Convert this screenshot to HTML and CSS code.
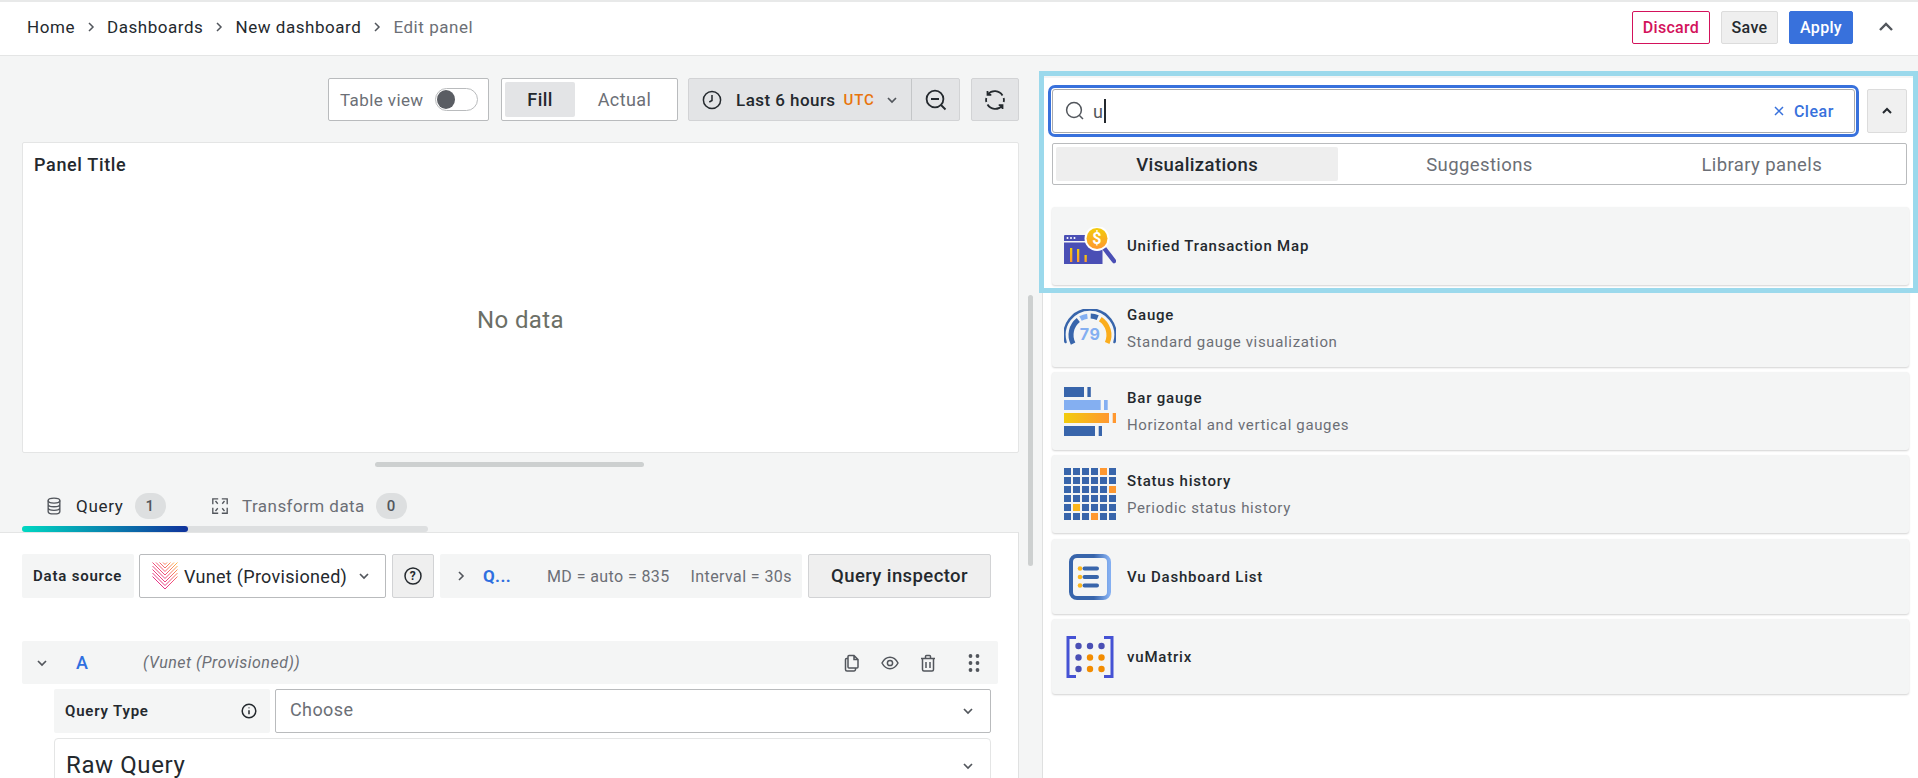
FILE: index.html
```html
<!DOCTYPE html>
<html lang="en">
<head>
<meta charset="utf-8">
<title>Edit panel</title>
<link rel="stylesheet" href="styles.css">
</head>
<body>
<header class="topbar">
  <nav class="crumbs">
    <span>Home</span>
    <svg class="crumb-sep" viewBox="0 0 10 12"><path d="M3 2l4 4-4 4"/></svg>
    <span>Dashboards</span>
    <svg class="crumb-sep" viewBox="0 0 10 12"><path d="M3 2l4 4-4 4"/></svg>
    <span>New dashboard</span>
    <svg class="crumb-sep" viewBox="0 0 10 12"><path d="M3 2l4 4-4 4"/></svg>
    <span class="crumb-last">Edit panel</span>
  </nav>
  <div class="top-actions">
    <button class="btn btn-discard">Discard</button>
    <button class="btn btn-save">Save</button>
    <button class="btn btn-apply">Apply</button>
    <svg class="top-chevron" viewBox="0 0 16 10"><path d="M2 8l6-6 6 6"/></svg>
  </div>
</header>

<main class="workspace">
  <section class="editor">
    <div class="toolbar">
      <div class="tool table-view">
        <span>Table view</span>
        <span class="switch"><span class="knob"></span></span>
      </div>
      <div class="tool radio">
        <span class="radio-item radio-on">Fill</span>
        <span class="radio-item">Actual</span>
      </div>
      <div class="tool time-group">
        <div class="time-range">
          <svg class="ico-20" viewBox="0 0 20 20"><circle cx="10" cy="10" r="8.600"/><path d="M10 5v5.500L7.300 12"/></svg>
          <span class="time-label">Last 6 hours</span>
          <span class="utc">UTC</span>
          <svg class="chev" viewBox="0 0 12 8"><path d="M2 2l4 4 4-4"/></svg>
        </div>
        <div class="time-zoom">
          <svg class="ico-22" viewBox="0 0 22 22"><circle cx="10" cy="10" r="8.400"/><path d="M6 10h8M16 16l4.500 4.500"/></svg>
        </div>
      </div>
      <div class="tool refresh">
        <svg class="ico-22" viewBox="0 0 22 22"><path d="M18.500 6.500A9 9 0 0 0 4 5.200M3.500 2v3.800h3.800M3.500 15.500A9 9 0 0 0 18 16.800M18.500 20v-3.800h-3.800M2.300 9a9 9 0 0 0 0 4M19.700 9a9 9 0 0 1 0 4"/></svg>
      </div>
    </div>

    <div class="panel">
      <div class="panel-title">Panel Title</div>
      <div class="panel-empty">No data</div>
    </div>
    <div class="h-handle"></div>

    <div class="query-tabs">
      <div class="qtab qtab-query">
        <svg class="ico-18" viewBox="0 0 18 20"><ellipse cx="9" cy="4" rx="6.500" ry="2.800"/><path d="M2.500 4v12c0 1.600 2.900 2.800 6.500 2.800s6.500-1.200 6.500-2.800V4M2.500 8c0 1.600 2.900 2.800 6.500 2.800s6.500-1.200 6.500-2.800M2.500 12c0 1.600 2.900 2.800 6.500 2.800s6.500-1.200 6.500-2.800"/></svg>
        <span class="qtab-text-on">Query</span>
        <span class="badge">1</span>
      </div>
      <div class="qtab qtab-transform">
        <svg class="ico-18" viewBox="0 0 20 20"><path d="M2 8V2h6M12 2h6v6M18 12v6h-6M8 18H2v-6M5 4.500l2.500 3M15 4.500l-2.500 3M15 15.500l-2.500-3M5 15.500l2.500-3"/></svg>
        <span>Transform data</span>
        <span class="badge">0</span>
      </div>
    </div>
    <div class="tab-track"><div class="tab-progress"></div></div>

    <div class="query">
      <div class="ds-row">
        <div class="label-box ds-label">Data source</div>
        <div class="select ds-select">
          <svg class="vunet" viewBox="0 0 26 28">
            <defs>
              <linearGradient id="vg" gradientUnits="userSpaceOnUse" x1="1" y1="26" x2="25" y2="2">
                <stop offset="0" stop-color="#e11d8f"/>
                <stop offset=".55" stop-color="#f0527a"/>
                <stop offset="1" stop-color="#fdb44b"/>
              </linearGradient>
            </defs>
            <path class="vunet-lines" d="M.5 14.500L13 27 25.500 14.500M.5 11L13 23.500 25.500 11M.5 7.500L13 20 25.500 7.500M.5 4L13 16.500 25.500 4M.5 .5L13 13 25.500 .5M4 .5l9 9 9-9M7.500 .5L13 6l5.500-5.500M11 .5l2 2 2-2"/>
          </svg>
          <span class="ds-name">Vunet (Provisioned)</span>
          <svg class="chev" viewBox="0 0 12 8"><path d="M2 2l4 4 4-4"/></svg>
        </div>
        <div class="help-btn">
          <svg class="ico-18" viewBox="0 0 18 18"><circle cx="9" cy="9" r="8"/><text class="help-q" x="9" y="13">?</text></svg>
        </div>
        <div class="ds-info">
          <svg class="chev-right" viewBox="0 0 8 12"><path d="M2 2l4 4-4 4"/></svg>
          <span class="q-name">Q...</span>
          <span class="md">MD = auto = 835</span>
          <span class="interval">Interval = 30s</span>
        </div>
        <button class="inspector">Query inspector</button>
      </div>

      <div class="q-head">
        <svg class="chev chev-a" viewBox="0 0 12 8"><path d="M2 2l4 4 4-4"/></svg>
        <span class="q-letter">A</span>
        <span class="q-src">(Vunet (Provisioned))</span>
        <div class="q-actions">
          <svg class="ico-18" viewBox="0 0 18 18"><path d="M6 1.500h5l4 4v7.500a1 1 0 0 1-1 1H6a1 1 0 0 1-1-1V2.500a1 1 0 0 1 1-1zM11 1.500v4h4M5 4.500H3.500a1 1 0 0 0-1 1v10a1.500 1.500 0 0 0 1.500 1.500h7a1.500 1.500 0 0 0 1.500-1.500V14"/></svg>
          <svg class="ico-18" viewBox="0 0 18 18"><path d="M1 9c2-3.800 4.800-5.700 8-5.700s6 1.900 8 5.700c-2 3.800-4.800 5.700-8 5.700S3 12.800 1 9z"/><circle cx="9" cy="9" r="2.600"/></svg>
          <svg class="ico-18" viewBox="0 0 18 18"><path d="M2 4.500h14M6.500 4.500V2.500a1 1 0 0 1 1-1h3a1 1 0 0 1 1 1v2M3.500 4.500v11a1.500 1.500 0 0 0 1.500 1.500h8a1.500 1.500 0 0 0 1.500-1.500v-11M7 8v6M11 8v6"/></svg>
          <svg class="grip" viewBox="0 0 12 20"><circle cx="2.500" cy="3" r="1.900"/><circle cx="9.500" cy="3" r="1.900"/><circle cx="2.500" cy="10" r="1.900"/><circle cx="9.500" cy="10" r="1.900"/><circle cx="2.500" cy="17" r="1.900"/><circle cx="9.500" cy="17" r="1.900"/></svg>
        </div>
      </div>

      <div class="q-body">
        <div class="qt-row">
          <div class="label-box qt-label">
            <span>Query Type</span>
            <svg class="ico-16" viewBox="0 0 16 16"><circle cx="8" cy="8" r="6.800"/><path d="M8 7.300v4M8 4.400v.9"/></svg>
          </div>
          <div class="select qt-select">
            <span>Choose</span>
            <svg class="chev" viewBox="0 0 12 8"><path d="M2 2l4 4 4-4"/></svg>
          </div>
        </div>
        <div class="raw">
          <span>Raw Query</span>
          <svg class="chev" viewBox="0 0 12 8"><path d="M2 2l4 4 4-4"/></svg>
        </div>
      </div>
    </div>
  </section>

  <div class="gutter"><div class="v-thumb"></div></div>

  <aside class="picker">
    <div class="search-row">
      <div class="search">
        <svg class="search-ico" viewBox="0 0 20 20"><circle cx="9" cy="9" r="7.400"/><path d="M14.500 14.500L18 18"/></svg>
        <span class="search-value">u</span><span class="caret"></span>
        <span class="clear">
          <svg class="clear-x" viewBox="0 0 10 10"><path d="M1 1l8 8M9 1l-8 8"/></svg>
          Clear
        </span>
      </div>
      <div class="collapse">
        <svg class="chev" viewBox="0 0 12 8"><path d="M2 6l4-4 4 4"/></svg>
      </div>
    </div>
    <div class="picker-tabs">
      <span class="ptab ptab-on">Visualizations</span>
      <span class="ptab">Suggestions</span>
      <span class="ptab">Library panels</span>
    </div>

    <div class="cards">
      <div class="card">
        <svg class="viz-ico utm" viewBox="0 0 52 38">
          <defs>
            <linearGradient id="gold" x1="0" y1="0" x2="0" y2="1">
              <stop offset="0" stop-color="#f2cc0c"/>
              <stop offset="1" stop-color="#ff9830"/>
            </linearGradient>
          </defs>
          <path fill="#4a4fb5" d="M0 9a1 1 0 0 1 1-1h37v6H0zM0 15.500h38.500V37H0z"/>
          <circle cx="3.500" cy="11" r="1" fill="#fff"/><circle cx="7" cy="11" r="1" fill="#fff"/><circle cx="10.500" cy="11" r="1" fill="#fff"/>
          <rect x="6" y="21" width="2.300" height="14" fill="url(#gold)"/>
          <rect x="13" y="22" width="2.300" height="13" fill="url(#gold)"/>
          <rect x="20.500" y="28" width="2.300" height="7" fill="url(#gold)"/>
          <path d="M40 21l10 13" stroke="#4a4fb5" stroke-width="4.500" stroke-linecap="round" fill="none"/>
          <circle cx="33" cy="11.500" r="12.500" fill="#fff"/>
          <circle cx="33" cy="11.500" r="10.500" fill="url(#gold)"/>
          <text class="dollar" x="33" y="17">$</text>
        </svg>
        <div class="card-text"><div class="card-title">Unified Transaction Map</div></div>
      </div>

      <div class="card">
        <svg class="viz-ico gauge" viewBox="0 0 52 38">
          <path d="M1.500 33A25.500 25.500 0 1 1 50.500 33" fill="none" stroke="#3865ab" stroke-width="2.500" stroke-linecap="round"/>
          <path d="M9.100 34.600A19 19 0 0 1 14.300 11" fill="none" stroke="#3865ab" stroke-width="5"/>
          <path d="M16.500 9.500A19 19 0 0 1 23.400 7.200" fill="none" stroke="#84aff1" stroke-width="5"/>
          <path d="M26.700 7A19 19 0 0 1 33.700 8.600" fill="none" stroke="#3865ab" stroke-width="5"/>
          <path d="M36.300 10.100A19 19 0 0 1 43.200 34" fill="none" stroke="#fbad1d" stroke-width="5"/>
          <text class="gauge-num" x="26" y="31">79</text>
        </svg>
        <div class="card-text">
          <div class="card-title">Gauge</div>
          <div class="card-desc">Standard gauge visualization</div>
        </div>
      </div>

      <div class="card">
        <svg class="viz-ico bars" viewBox="0 0 52 49">
          <defs>
            <linearGradient id="bar-grad" x1="0" y1="0" x2="1" y2="0">
              <stop offset="0" stop-color="#f2cc0c"/>
              <stop offset="1" stop-color="#ff9830"/>
            </linearGradient>
          </defs>
          <rect x="0" y="0" width="20" height="10" fill="#3865ab"/><rect x="23.400" y="0" width="3.400" height="10" fill="#3865ab"/>
          <rect x="0" y="13" width="36.700" height="10" fill="#84aff1"/><rect x="40" y="13" width="3.700" height="10" fill="#84aff1"/>
          <rect x="0" y="26" width="45" height="10" fill="url(#bar-grad)"/><rect x="48.700" y="26" width="3.300" height="10" fill="#ff9830"/>
          <rect x="0" y="39" width="31" height="10" fill="#3865ab"/><rect x="34.700" y="39" width="3.300" height="10" fill="#3865ab"/>
        </svg>
        <div class="card-text">
          <div class="card-title">Bar gauge</div>
          <div class="card-desc">Horizontal and vertical gauges</div>
        </div>
      </div>

      <div class="card card-status">
        <svg class="viz-ico status" viewBox="0 0 52 52">
          <g fill="#3865ab">
            <rect x="0" y="0" width="7" height="7"/><rect x="9" y="0" width="7" height="7"/><rect x="18" y="0" width="7" height="7"/><rect x="27" y="0" width="7" height="7"/><rect x="36" y="0" width="7" height="7" fill="#ff9830"/><rect x="45" y="0" width="7" height="7"/>
            <rect x="0" y="9" width="7" height="7"/><rect x="9" y="9" width="7" height="7"/><rect x="18" y="9" width="7" height="7"/><rect x="27" y="9" width="7" height="7"/><rect x="36" y="9" width="7" height="7"/><rect x="45" y="9" width="7" height="7"/>
            <rect x="0" y="18" width="7" height="7"/><rect x="9" y="18" width="7" height="7"/><rect x="18" y="18" width="7" height="7"/><rect x="27" y="18" width="7" height="7"/><rect x="36" y="18" width="7" height="7"/><rect x="45" y="18" width="7" height="7" fill="#ff9830"/>
            <rect x="0" y="27" width="7" height="7"/><rect x="9" y="27" width="7" height="7"/><rect x="18" y="27" width="7" height="7"/><rect x="27" y="27" width="7" height="7"/><rect x="36" y="27" width="7" height="7"/><rect x="45" y="27" width="7" height="7"/>
            <rect x="0" y="36" width="7" height="7"/><rect x="9" y="36" width="7" height="7" fill="#fbb61c"/><rect x="18" y="36" width="7" height="7"/><rect x="27" y="36" width="7" height="7"/><rect x="36" y="36" width="7" height="7"/><rect x="45" y="36" width="7" height="7"/>
            <rect x="0" y="45" width="7" height="7"/><rect x="9" y="45" width="7" height="7"/><rect x="18" y="45" width="7" height="7"/><rect x="27" y="45" width="7" height="7" fill="#ff9830"/><rect x="36" y="45" width="7" height="7"/><rect x="45" y="45" width="7" height="7"/>
          </g>
        </svg>
        <div class="card-text">
          <div class="card-title">Status history</div>
          <div class="card-desc">Periodic status history</div>
        </div>
      </div>

      <div class="card card-short">
        <svg class="viz-ico vulist" viewBox="0 0 52 46">
          <defs>
            <linearGradient id="list-grad" x1="0" y1="0" x2="1" y2="0">
              <stop offset="0" stop-color="#3865ab"/>
              <stop offset=".6" stop-color="#3865ab"/>
              <stop offset="1" stop-color="#84aff1"/>
            </linearGradient>
          </defs>
          <rect x="7" y="2" width="38" height="42" rx="6" fill="none" stroke="url(#list-grad)" stroke-width="4"/>
          <circle cx="16" cy="14.500" r="2.300" fill="#fbb61c"/><circle cx="16" cy="23" r="2.300" fill="#fbb61c"/><circle cx="16" cy="31.500" r="2.300" fill="#fbb61c"/>
          <path d="M20.500 14.500h12.500M20.500 23h12.500M20.500 31.500h12.500" stroke="#3865ab" stroke-width="4" stroke-linecap="round"/>
        </svg>
        <div class="card-text"><div class="card-title">Vu Dashboard List</div></div>
      </div>

      <div class="card card-short">
        <svg class="viz-ico matrix" viewBox="0 0 52 42">
          <path d="M12 1.500H4v39h8M40 1.500h8v39h-8" fill="none" stroke="#4552d4" stroke-width="3"/>
          <g fill="#4a4fb5">
            <circle cx="14.500" cy="10" r="3.200"/><circle cx="26" cy="10" r="3.200"/><circle cx="37.500" cy="10" r="3.200"/>
            <circle cx="14.500" cy="21.500" r="3.200"/><circle cx="14.500" cy="33" r="3.200"/>
          </g>
          <g fill="#f28c00">
            <circle cx="26" cy="21.500" r="3.200"/><circle cx="37.500" cy="21.500" r="3.200"/>
            <circle cx="26" cy="33" r="3.200"/><circle cx="37.500" cy="33" r="3.200"/>
          </g>
        </svg>
        <div class="card-text"><div class="card-title">vuMatrix</div></div>
      </div>
    </div>
  </aside>
</main>

<div class="highlight"></div>
</body>
</html>
```

FILE: styles.css
```css
* { box-sizing: border-box; }
html, body { margin: 0; height: 778px; overflow: hidden; }
body {
  position: relative;
  background: #f4f5f5;
  color: #24292e;
  font-family: "Roboto", "Liberation Sans", sans-serif;
  font-size: 17px;
  letter-spacing: .4px;
}
button { font: inherit; letter-spacing: inherit; cursor: pointer; }
svg { display: block; flex: none; }

/* Top bar */
.topbar {
  height: 56px;
  background: #fff;
  border-top: 2px solid #e8e9e9;
  border-bottom: 1px solid #e4e5e5;
  display: flex;
  align-items: center;
  justify-content: space-between;
  padding: 0 24px 0 27px;
}
.crumbs { display: flex; align-items: center; gap: 10px; font-size: 17px; letter-spacing: .55px; padding-bottom: 3px; }
.crumb-sep { width: 10px; height: 12px; fill: none; stroke: #52565c; stroke-width: 1.500; margin: 0 1px; }
.crumb-last { color: #6c6f76; }
.top-actions { display: flex; align-items: center; height: 33px; margin-bottom: 3px; }
.btn { height: 33px; border-radius: 2px; padding: 0; font-size: 16px; font-weight: 500; letter-spacing: .3px; }
.btn-discard { width: 78px; background: #fff; color: #d3125b; border: 1px solid #d3125b; margin-right: 11px; }
.btn-save { width: 57px; background: #efefef; color: #24292e; border: 1px solid #dcdcdc; margin-right: 11px; }
.btn-apply { width: 64px; background: #3871dc; color: #fff; border: 1px solid #3871dc; margin-right: 25px; }
.top-chevron { width: 16px; height: 10px; fill: none; stroke: #52565c; stroke-width: 2.400; }

/* Layout */
.workspace { display: flex; height: 722px; }
.editor { width: 1019px; display: flex; flex-direction: column; height: 722px; }
.gutter { width: 23px; }
.v-thumb { width: 5px; height: 271px; margin: 239px 0 0 9px; background: #cdd0d0; border-radius: 3px; }

/* Toolbar */
.toolbar { display: flex; justify-content: flex-end; padding-top: 22px; height: 65px; }
.tool { height: 43px; display: flex; align-items: center; border-radius: 2px; }
.ico-20 { width: 20px; height: 20px; fill: none; stroke: #24292e; stroke-width: 1.500; }
.ico-22 { width: 22px; height: 22px; fill: none; stroke: #24292e; stroke-width: 1.800; }
.ico-18 { width: 18px; height: 18px; fill: none; stroke: #52565c; stroke-width: 1.500; }
.ico-16 { width: 16px; height: 16px; fill: none; stroke: #24292e; stroke-width: 1.500; }
.chev { width: 12px; height: 8px; fill: none; stroke: #52565c; stroke-width: 1.700; }
.table-view {
  width: 161px; background: #fff; border: 1px solid #b9bbbd;
  padding: 0 10px 0 11px; justify-content: space-between; color: #6c6f76; margin-right: 12px;
}
.switch { width: 43px; height: 23px; border: 1px solid #b9bbbd; border-radius: 12px; background: #fff; display: flex; align-items: center; padding-left: 1px; }
.knob { width: 18px; height: 19px; border-radius: 50%; background: #5a5d63; }
.radio { width: 177px; background: #fff; border: 1px solid #b9bbbd; padding: 3px; margin-right: 10px; font-size: 18px; }
.radio-item { flex: 1; height: 100%; display: flex; align-items: center; justify-content: center; color: #6c6f76; }
.radio-on { flex: 0 0 70px; background: #e3e4e6; color: #24292e; font-weight: 500; border-radius: 2px; }
.time-group { width: 272px; background: #e3e4e6; border: 1px solid #d2d3d5; margin-right: 11px; }
.time-range { width: 223px; height: 100%; display: flex; align-items: center; padding-left: 13px; border-right: 1px solid #c4c6c8; }
.time-label { font-weight: 500; margin-left: 14px; font-size: 17px; letter-spacing: .45px; }
.utc { color: #e8740c; font-size: 15px; font-weight: 500; margin-left: 8px; letter-spacing: .8px; }
.time-range .chev { margin-left: 11px; }
.time-zoom { flex: 1; display: flex; justify-content: center; }
.refresh { width: 48px; background: #e3e4e6; border: 1px solid #d2d3d5; justify-content: center; }

/* Panel */
.panel {
  margin: 21px 0 0 22px; height: 311px; background: #fff;
  border: 1px solid #e4e5e5; border-radius: 2px; display: flex; flex-direction: column;
}
.panel-title { padding: 12px 0 0 11px; font-size: 18px; font-weight: 500; line-height: 20px; letter-spacing: .65px; }
.panel-empty { flex: 1; display: flex; align-items: center; justify-content: center; font-size: 24px; color: #6c6f66; padding-top: 12px; }
.h-handle { width: 269px; height: 5px; margin: 9px 0 0 375px; background: #cdd0d0; border-radius: 3px; }

/* Query tabs */
.query-tabs { display: flex; margin: 26px 0 0 22px; height: 26px; }
.qtab { display: flex; align-items: center; color: #6c6f76; }
.qtab-query { width: 166px; padding-left: 23px; letter-spacing: .7px; }
.qtab-query span:first-of-type { margin-left: 13px; }
.qtab-transform { padding-left: 23px; letter-spacing: .45px; }
.qtab-transform span:first-of-type { margin-left: 13px; }
.qtab-text-on { color: #24292e; }
.badge {
  margin-left: 11px; width: 31px; height: 26px; border-radius: 13px; background: #dddfe0;
  display: flex; align-items: center; justify-content: center; font-size: 15px; font-weight: 500; color: #52565c;
}
.tab-track { margin: 7px 0 0 22px; width: 406px; height: 6px; background: #dddfe0; border-radius: 3px; position: relative; }
.tab-progress { width: 166px; height: 6px; border-radius: 3px; background: linear-gradient(90deg, #00d8c2, #10329c); }

/* Query section */
.query { flex: 1; min-height: 0; background: #fff; border-top: 1px solid #e4e5e5; border-right: 1px solid #e0e1e1; padding: 21px 0 0 22px; overflow: hidden; }
.ds-row { display: flex; height: 44px; }
.label-box { background: #f4f5f5; border-radius: 2px; font-size: 15px; font-weight: 600; letter-spacing: .8px; display: flex; align-items: center; }
.ds-label { width: 112px; padding-left: 11px; margin-right: 5px; }
.select { background: #fff; border: 1px solid #b9bbbd; border-radius: 2px; display: flex; align-items: center; }
.ds-select { width: 247px; padding-left: 12px; margin-right: 6px; }
.vunet { width: 26px; height: 28px; }
.vunet-lines { fill: none; stroke: url(#vg); stroke-width: 1; }
.ds-name { font-size: 18px; margin: 0 11px 0 6px; letter-spacing: .3px; }
.help-btn { width: 42px; background: #efefef; border: 1px solid #d2d3d5; border-radius: 2px; display: flex; align-items: center; justify-content: center; margin-right: 6px; }
.help-btn .ico-18 { stroke: #24292e; }
.help-q { font-size: 12px; font-weight: 700; text-anchor: middle; fill: #24292e; stroke: none; }
.ds-info { width: 362px; background: #f4f5f5; border-radius: 2px; display: flex; align-items: center; padding-left: 17px; font-size: 16px; letter-spacing: .4px; color: #6c6f76; margin-right: 6px; }
.chev-right { width: 8px; height: 12px; fill: none; stroke: #52565c; stroke-width: 1.600; }
.q-name { color: #2f6fe0; font-weight: 700; font-size: 17px; margin-left: 18px; width: 64px; }
.interval { margin-left: 21px; }
.inspector { width: 183px; background: #efefef; border: 1px solid #d2d3d5; border-radius: 2px; padding: 0; font-size: 18.500px; font-weight: 500; color: #24292e; }

.q-head { display: flex; align-items: center; width: 976px; height: 43px; margin-top: 43px; background: #f4f5f5; border-radius: 2px; padding-left: 14px; }
.chev-a { margin-right: 28px; }
.q-letter { color: #2f6fe0; font-size: 18px; font-weight: 500; width: 67px; }
.q-src { font-size: 16px; font-style: italic; color: #6c6f76; flex: 1; letter-spacing: .5px; }
.q-actions { display: flex; align-items: center; gap: 20px; padding-right: 18px; }
.grip { width: 12px; height: 20px; fill: #52565c; margin-left: 11px; }

.q-body { margin: 5px 0 0 32px; width: 937px; }
.qt-row { display: flex; height: 44px; }
.qt-label { width: 216px; padding: 0 13px 0 11px; justify-content: space-between; margin-right: 5px; }
.qt-select { flex: 1; justify-content: space-between; padding: 0 16px 3px 14px; font-size: 18px; color: #6c6f76; }
.qt-select .chev { margin-top: 3px; }
.raw { margin-top: 5px; height: 70px; border: 1px solid #e4e5e5; border-radius: 4px; padding: 13px 16px 0 11px; display: flex; justify-content: space-between; align-items: flex-start; font-size: 24px; line-height: 26px; letter-spacing: .6px; }
.raw .chev { margin-top: 10px; }

/* Visualization picker */
.picker { flex: 1; margin-top: 22px; background: #fff; border-left: 1px solid #dfe0e0; padding: 11px 0 0 9px; }
.search-row { display: flex; height: 44px; }
.search {
  width: 803px; margin-right: 12px; height: 44px; border: 1px solid #a9abae; border-radius: 3px; background: #fff;
  outline: 3px solid #3871dc; outline-offset: 1px;
  display: flex; align-items: center; padding: 0 20px 0 12px;
}
.search-ico { width: 20px; height: 20px; fill: none; stroke: #52565c; stroke-width: 1.500; }
.search-value { font-size: 18px; color: #52565c; margin-left: 8px; }
.caret { width: 2px; height: 24px; background: #24292e; margin-left: 1px; }
.clear { margin-left: auto; display: flex; align-items: center; color: #3871dc; font-size: 16px; font-weight: 500; gap: 10px; letter-spacing: .55px; }
.clear-x { width: 10px; height: 10px; fill: none; stroke: #3871dc; stroke-width: 1.500; }
.collapse { width: 40px; height: 44px; background: #f0f0f0; border: 1px solid #dcdcdc; border-radius: 2px; display: flex; align-items: center; justify-content: center; }
.collapse .chev { stroke: #24292e; stroke-width: 2; }
.picker-tabs { display: grid; grid-template-columns: repeat(3, 1fr); width: 855px; height: 42px; margin-top: 10px; padding: 3px; border: 1px solid #b9bbbd; border-radius: 2px; }
.ptab { display: flex; align-items: center; justify-content: center; font-size: 18.500px; color: #6c6f76; padding-top: 1px; }
.ptab-on { background: #eeeeee; color: #24292e; font-weight: 500; border-radius: 2px; }

.cards { width: 857px; margin-top: 22px; display: flex; flex-direction: column; }
.card {
  height: 78px; background: #f4f5f5; border-radius: 3px; box-shadow: 0 1px 2px rgba(0,0,0,.18);
  display: flex; align-items: center; padding-left: 12px; margin-bottom: 5px;
}
.card:first-child { margin-bottom: 4px; }
.card-status { margin-bottom: 6px; }
.card-short { height: 75px; }
.card-text { margin-left: 11px; display: flex; flex-direction: column; gap: 9px; }
.card-title { font-size: 15px; font-weight: 500; line-height: 18px; letter-spacing: .8px; }
.card-desc { font-size: 15px; line-height: 18px; color: #6c6f76; letter-spacing: .65px; }
.viz-ico { width: 52px; }
.utm { height: 38px; }
.gauge { height: 38px; }
.bars { height: 49px; }
.status { height: 52px; }
.vulist { height: 46px; }
.matrix { height: 42px; }
.dollar { font-size: 16px; font-weight: 700; text-anchor: middle; fill: #fff; }
.gauge-num { font-size: 16px; font-weight: 700; text-anchor: middle; fill: #84aff1; font-family: "Inter", sans-serif; }

/* Annotation */
.highlight { position: absolute; left: 1039px; top: 71px; width: 879px; height: 222px; border: 5px solid #9bd9ec; pointer-events: none; }
```
